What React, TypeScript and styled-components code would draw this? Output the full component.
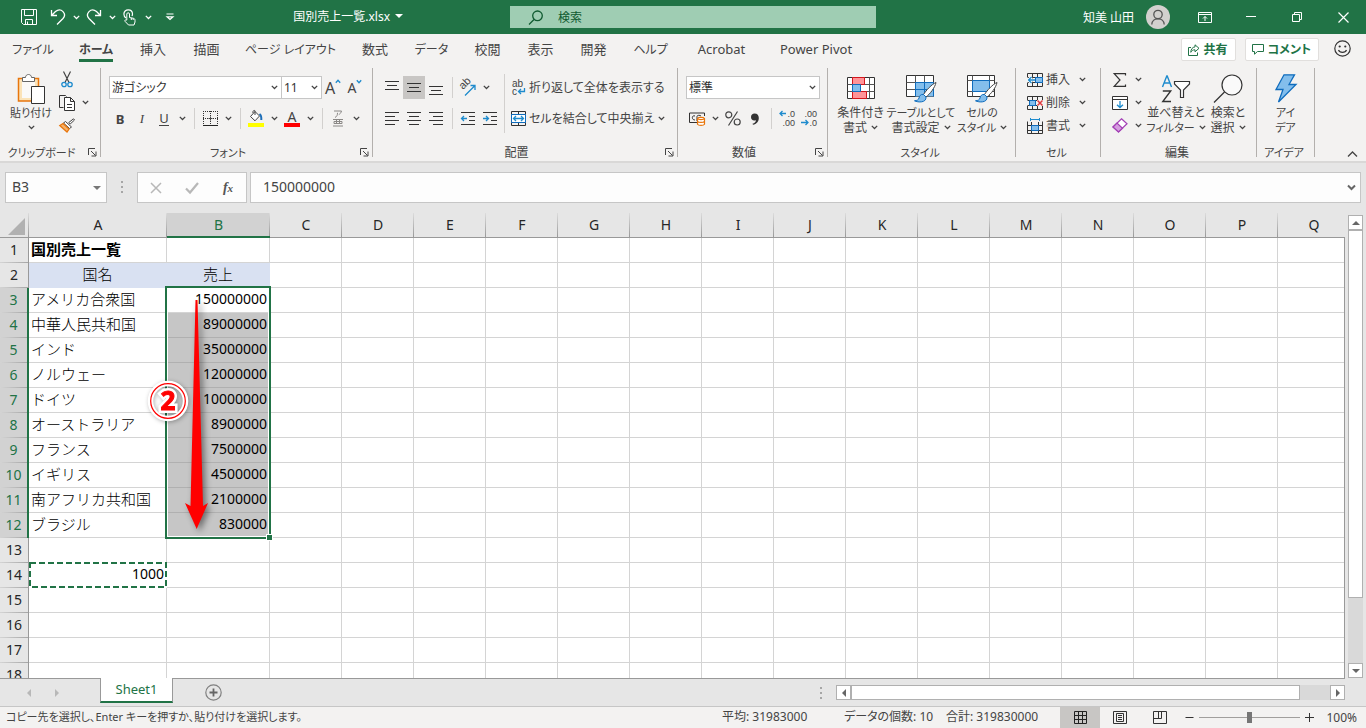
import React from "react";
import styled, { createGlobalStyle, css } from "styled-components";

const UI = `"Noto Sans", "Noto Sans CJK JP", sans-serif`;
const SHEET = `"Noto Sans", "Noto Sans CJK JP", sans-serif`;
const GREEN = "#217346";
const INK = "#444444";
const BLUE = "#1e8bcd";
const ORANGE = "#e8760c";

/* Labels written only in kana are set one size smaller. */
const isKana = (text: string) => /^[\u3041-\u30ff ]+$/.test(text);

const GlobalStyle = createGlobalStyle`
  *, *::before, *::after { box-sizing: border-box; }
  body { margin: 0; background: #e6e6e6; color: ${INK}; font: 12px/15px ${UI}; font-feature-settings: "palt"; }
  button, input, select { font: inherit; font-feature-settings: inherit; color: inherit; margin: 0; }
  button { border: 0; padding: 0; background: none; }
  svg { display: block; flex: none; overflow: visible; }
`;

const Page = styled.div`
  display: flex;
  flex-direction: column;
  height: 100vh;
  overflow: hidden;
`;

/* ---------- drawing helpers ---------- */

type DrawProps = { w: number; h: number; children: React.ReactNode };
const Draw = ({ w, h, children }: DrawProps) => (
  <svg width={w} height={h} viewBox={`0 0 ${w} ${h}`} fill="none" stroke={INK} strokeWidth="1" aria-hidden="true">
    {children}
  </svg>
);

const Chevron = ({ color = INK }: { color?: string }) => (
  <svg width="7" height="5" viewBox="0 0 7 5" fill="none" stroke={color} strokeWidth="1.3" aria-hidden="true">
    <path d="M0.8 0.9L3.5 3.5L6.2 0.9" />
  </svg>
);

const Triangle = ({ dir, color = "#666" }: { dir: "up" | "down" | "left" | "right"; color?: string }) => {
  const shapes = {
    up: "M0 6L4 2L8 6Z",
    down: "M0 2L4 6L8 2Z",
    left: "M6 0L2 4L6 8Z",
    right: "M2 0L6 4L2 8Z",
  };
  return (
    <svg width="8" height="8" viewBox="0 0 8 8" fill={color} aria-hidden="true">
      <path d={shapes[dir]} />
    </svg>
  );
};

/* ---------- title bar ---------- */

const TitleBar = styled.header`
  display: grid;
  grid-template-columns: 510fr 366fr 490fr;
  align-items: center;
  height: 34px;
  flex: none;
  background: ${GREEN};
  color: #fff;
`;

const TitleStart = styled.div`
  display: flex;
  align-items: center;
  justify-content: space-between;
  padding: 0 107px 0 14px;
`;

const QuickAccess = styled.div`
  display: flex;
  align-items: center;
`;

const QuickButton = styled.button<{ $w?: number }>`
  display: flex;
  align-items: center;
  justify-content: center;
  width: ${(p) => p.$w ?? 28}px;
  height: 34px;
`;

const FileName = styled.button`
  display: flex;
  align-items: center;
  gap: 5px;
  padding-bottom: 2px;
  font-size: 12px;
  white-space: nowrap;
`;

const SearchBox = styled.label`
  display: flex;
  align-items: center;
  gap: 14px;
  height: 22px;
  padding-left: 18px;
  background: #9fcdb3;
  color: #0f5a30;
`;

const SearchInput = styled.input`
  flex: 1;
  min-width: 0;
  padding: 0;
  border: 0;
  outline: 0;
  background: none;
  &::placeholder { color: #0f5a30; opacity: 1; }
`;

const TitleEnd = styled.div`
  display: flex;
  align-items: center;
  justify-content: flex-end;
`;

const Account = styled.button`
  display: flex;
  align-items: center;
  gap: 12px;
  padding-right: 12px;
`;

const WindowButton = styled.button`
  display: flex;
  align-items: center;
  justify-content: center;
  width: 46px;
  height: 34px;
`;

/* ---------- ribbon tabs ---------- */

const TabRow = styled.nav`
  display: flex;
  justify-content: space-between;
  height: 32px;
  flex: none;
  background: #f3f2f1;
`;

const TabStrip = styled.div`
  display: grid;
  grid-template-columns: 66px 60px 54px 53px 115px 54px 59px 53px 53px 53px 61px 81px 108px;
`;

const Tab = styled.button<{ $active?: boolean; $kana?: boolean }>`
  display: flex;
  justify-content: center;
  padding-top: 6px;
  font-size: ${(p) => (p.$kana ? 12 : 13)}px;
  line-height: 19px;
  white-space: nowrap;
  ${(p) =>
    p.$active &&
    css`
      font-weight: 700;
      span { border-bottom: 3px solid ${GREEN}; height: 22px; }
    `}
`;

const TabActions = styled.div`
  display: flex;
  align-items: flex-start;
  gap: 9px;
  padding: 4px 15px 0 0;
`;

const ActionButton = styled.button`
  display: flex;
  align-items: center;
  gap: 4px;
  height: 23px;
  padding: 0 7px 0 6px;
  border: 1px solid #e1dfdd;
  border-radius: 2px;
  background: #fff;
  color: ${GREEN};
  font-weight: 700;
  white-space: nowrap;
`;

const SmileButton = styled.button`
  padding: 2px 0 0 6px;
`;

/* ---------- ribbon ---------- */

const Ribbon = styled.div`
  display: flex;
  height: 95px;
  flex: none;
  background: #f3f2f1;
`;

const Group = styled.section<{ $w: number }>`
  display: flex;
  flex-direction: column;
  width: ${(p) => p.$w}px;
  height: 89px;
  margin-top: 2px;
  border-right: 1px solid #b3b0ad;
`;

const GroupBody = styled.div<{ $pad?: number; $gap?: number }>`
  display: flex;
  flex: 1;
  align-items: flex-start;
  gap: ${(p) => p.$gap ?? 0}px;
  padding-left: ${(p) => p.$pad ?? 8}px;
`;

const GroupFooter = styled.div<{ $kana?: boolean }>`
  display: flex;
  align-items: center;
  height: 10px;
  padding-right: 3px;
  text-align: center;
  white-space: nowrap;
  font-size: ${(p) => (p.$kana ? 11 : 12)}px;
`;

const GroupLabel = styled.span`
  flex: 1;
`;

const Launcher = styled.button`
  width: 9px;
  margin-left: 5px;
`;

const RibbonEnd = styled.div`
  display: flex;
  flex: 1;
  align-items: flex-end;
  justify-content: flex-end;
  padding: 0 8px 4px 0;
`;

const Rows = styled.div<{ $top?: number; $gap?: number }>`
  display: flex;
  flex-direction: column;
  gap: ${(p) => p.$gap ?? 8}px;
  padding-top: ${(p) => p.$top ?? 8}px;
`;

const Row = styled.div`
  display: flex;
  align-items: center;
  height: 23px;
`;

const Tool = styled.button<{ $on?: boolean }>`
  display: flex;
  align-items: center;
  justify-content: center;
  width: 22px;
  height: 23px;
  background: ${(p) => (p.$on ? "#c8c6c4" : "none")};
`;

const Drop = styled.button<{ $w?: number }>`
  display: flex;
  align-items: center;
  justify-content: center;
  width: ${(p) => p.$w ?? 14}px;
  height: 23px;
`;

const Rule = styled.span`
  width: 1px;
  height: 21px;
  margin: 0 4px 0 5px;
  background: #d2d0ce;
`;

const TallRule = styled.span`
  width: 1px;
  height: 59px;
  margin: 6px 3px 0;
  background: #d2d0ce;
`;

const Letter = styled.span<{ $kind: "bold" | "italic" | "underline" }>`
  font-size: 13px;
  line-height: 14px;
  font-weight: ${(p) => (p.$kind === "bold" ? 700 : 400)};
  font-style: ${(p) => (p.$kind === "italic" ? "italic" : "normal")};
  font-family: ${(p) => (p.$kind === "italic" ? `"Liberation Serif", serif` : UI)};
  border-bottom: ${(p) => (p.$kind === "underline" ? `1px solid ${INK}` : "0")};
`;

const SizeLetter = styled.span<{ $size: number }>`
  font-size: ${(p) => p.$size}px;
  line-height: 20px;
`;

const Swatch = styled.span<{ $color: string }>`
  display: flex;
  flex-direction: column;
  align-items: center;
  width: 16px;
  height: 17px;
  border-bottom: 4px solid ${(p) => p.$color};
  line-height: 13px;
  font-size: 14px;
`;

const SelectBox = styled.span<{ $w: number }>`
  display: grid;
  grid-template-columns: 1fr 13px;
  align-items: center;
  width: ${(p) => p.$w}px;
  height: 23px;
  border: 1px solid #c6c6c6;
  background: #fff;
  & + & { border-left: 0; }
  select {
    grid-area: 1 / 1 / 2 / 3;
    appearance: none;
    width: 100%;
    height: 21px;
    padding: 0 2px;
    border: 0;
    background: none;
    color: #333;
  }
  svg { grid-area: 1 / 2; justify-self: center; pointer-events: none; }
`;

const TextTool = styled.button<{ $gap?: number }>`
  display: flex;
  align-items: center;
  gap: ${(p) => p.$gap ?? 3}px;
  height: 23px;
  padding-left: 3px;
  white-space: nowrap;
`;

const BigButton = styled.button<{ $w: number }>`
  display: flex;
  flex-direction: column;
  align-items: center;
  width: ${(p) => p.$w}px;
  padding-top: 4px;
  white-space: nowrap;
`;

const BigIcon = styled.span`
  display: flex;
  align-items: center;
  justify-content: center;
  height: 33px;
`;

const BigLine = styled.span<{ $kana?: boolean }>`
  display: flex;
  align-items: center;
  gap: 4px;
  height: 15px;
  font-size: ${(p) => (p.$kana ? 11 : 12)}px;
`;

const Spacer = styled.span`
  width: 5px;
`;

/* ---------- formula bar ---------- */

const FormulaBar = styled.div`
  display: flex;
  align-items: flex-start;
  height: 52px;
  flex: none;
  padding: 9px 5px 0;
  border-top: 2px solid #d9d8d7;
`;

const FieldBox = styled.div<{ $w?: number }>`
  display: flex;
  align-items: center;
  justify-content: space-between;
  height: 31px;
  ${(p) => (p.$w ? `width: ${p.$w}px;` : "flex: 1; min-width: 0;")}
  border: 1px solid #c6c6c6;
  background: #fdfdfd;
`;

const FieldInput = styled.input<{ $pad: number }>`
  flex: 1;
  min-width: 0;
  height: 29px;
  padding: 0 0 2px ${(p) => p.$pad}px;
  border: 0;
  outline: 0;
  background: none;
  font: 14px/18px ${SHEET};
`;

const FieldDrop = styled.button`
  display: flex;
  justify-content: center;
  width: 18px;
`;

const FormulaButton = styled.button`
  display: flex;
  justify-content: center;
  width: 36px;
`;

const Grip = styled.span`
  display: flex;
  flex-direction: column;
  gap: 3px;
  i { width: 2px; height: 2px; background: #a6a6a6; }
`;

const GripSlot = styled.div`
  display: flex;
  align-items: center;
  justify-content: center;
  width: 30px;
  height: 29px;
`;

const FieldGap = styled.div`
  width: 3px;
`;

/* ---------- sheet ---------- */

const Work = styled.main`
  display: flex;
  flex: 1;
  min-height: 0;
`;

const SheetView = styled.div`
  position: relative;
  flex: 1;
  min-width: 0;
  overflow: hidden;
`;

const SheetEdge = styled.div`
  width: 1px;
  margin-top: 24px;
  background: #999;
`;

const Grid = styled.table`
  width: 100%;
  min-width: 1350px;
  table-layout: fixed;
  border-collapse: separate;
  border-spacing: 0;
  color: #000;
  font: 14px/22px ${SHEET};
  font-feature-settings: normal;
`;

const ColHead = styled.th<{ $on?: boolean }>`
  height: 25px;
  padding: 0;
  font-weight: 400;
  color: ${(p) => (p.$on ? GREEN : "#262626")};
  border-bottom: ${(p) => (p.$on ? `2px solid ${GREEN}` : "1px solid #999")};
  background: linear-gradient(#dcdcdc, #999) right / 1px 100% no-repeat ${(p) => (p.$on ? "#d2d2d2" : "#e6e6e6")};
`;

const RowHead = styled.th<{ $on?: boolean }>`
  height: 25px;
  padding: 0 0 2px;
  font-weight: 400;
  color: ${(p) => (p.$on ? GREEN : "#262626")};
  border-right: ${(p) => (p.$on ? `2px solid ${GREEN}` : "1px solid #999")};
  background: linear-gradient(90deg, #d4d4d4, #a6a6a6) bottom / 100% 1px no-repeat ${(p) => (p.$on ? "#d2d2d2" : "#e6e6e6")};
`;

const Cell = styled.td<{ $kind?: string }>`
  height: 25px;
  padding: 0 2px 2px;
  overflow: hidden;
  white-space: nowrap;
  background: #fff;
  border-right: 1px solid #d4d4d4;
  border-bottom: 1px solid #d4d4d4;
  ${(p) => p.$kind === "text" && css`font-size: 15px; font-weight: 300;`}
  ${(p) => p.$kind === "title" && css`font-size: 15px; font-weight: 700;`}
  ${(p) =>
    p.$kind === "head" &&
    css`
      font-size: 15px;
      font-weight: 300;
      text-align: center;
      background: #d9e1f2;
      border-color: #d9e1f2;
    `}
  ${(p) => (p.$kind === "num" || p.$kind === "picked") && css`text-align: right;`}
  ${(p) => p.$kind === "picked" && css`background: #c6c6c6; border-color: #b0b0b0;`}
`;

const Selection = styled.div`
  position: absolute;
  left: 165px;
  top: 73px;
  width: 106px;
  height: 253px;
  border: 2px solid ${GREEN};
  box-shadow: inset 0 0 0 1px #fff;
`;

const FillHandle = styled.span`
  position: absolute;
  right: -4px;
  bottom: -4px;
  width: 7px;
  height: 7px;
  border: 1px solid #fff;
  background: ${GREEN};
`;

const CopyMarquee = styled.div`
  position: absolute;
  left: 29px;
  top: 349px;
`;

const DragArrow = styled.div`
  position: absolute;
  left: 180px;
  top: 84px;
  filter: drop-shadow(3px 3px 3px rgba(0, 0, 0, 0.45));
`;

const StepBadge = styled.div`
  position: absolute;
  left: 144px;
  top: 164px;
  filter: drop-shadow(1px 1px 2px rgba(0, 0, 0, 0.3));
`;

const VScroll = styled.div`
  display: flex;
  flex-direction: column;
  width: 15px;
  margin: 2px 3px 0;
  background: #d9d9d9;
`;

const ScrollButton = styled.button`
  display: flex;
  align-items: center;
  justify-content: center;
  width: 15px;
  height: 15px;
  flex: none;
  border: 1px solid #b0b0b0;
  background: #fff;
`;

const Thumb = styled.div<{ $grow: number }>`
  flex: ${(p) => p.$grow};
  border: 1px solid #b0b0b0;
  background: #fff;
`;

const Track = styled.div<{ $grow: number }>`
  flex: ${(p) => p.$grow};
`;

/* ---------- sheet tabs & status ---------- */

const SheetBar = styled.div`
  display: flex;
  height: 28px;
  flex: none;
`;

const BarPart = styled.div<{ $w?: number }>`
  display: flex;
  align-items: center;
  ${(p) => (p.$w ? `width: ${p.$w}px;` : "flex: 1; min-width: 0;")}
  border-top: 1px solid #999;
`;

const SheetNav = styled(BarPart)`
  gap: 20px;
  padding-left: 25px;
`;

const SheetTab = styled.button`
  width: 73px;
  height: 25px;
  border: 1px solid #999;
  border-width: 0 1px;
  border-bottom: 2px solid ${GREEN};
  background: #fff;
  color: ${GREEN};
  font-size: 13px;
`;

const TabFill = styled(BarPart)`
  justify-content: space-between;
  padding: 0 14px 0 32px;
`;

const HScroll = styled.div`
  display: flex;
  flex: 1;
  height: 15px;
  background: #d9d9d9;
`;

const EndPad = styled.div`
  width: 21px;
`;

const StatusBar = styled.footer`
  display: flex;
  align-items: stretch;
  height: 22px;
  flex: none;
  border-top: 1px solid #c6c6c6;
  background: #f3f2f1;
  white-space: nowrap;
  line-height: 20px;
`;

const StatusText = styled.span`
  flex: 1;
  padding-left: 6px;
  font-size: 11px;
`;

const Stats = styled.div`
  display: grid;
  grid-template-columns: 122px 102px 114px;
`;

const ViewButton = styled.button<{ $on?: boolean }>`
  display: flex;
  align-items: center;
  justify-content: center;
  width: 40px;
  background: ${(p) => (p.$on ? "#c8c6c4" : "none")};
`;

const ZoomBox = styled.div`
  display: flex;
  align-items: center;
  gap: 5px;
  padding: 0 9px 0 5px;
`;

const ZoomSlider = styled.input`
  appearance: none;
  width: 101px;
  height: 11px;
  background: linear-gradient(#a19f9d, #a19f9d) center / 100% 1px no-repeat;
  &::-webkit-slider-thumb {
    appearance: none;
    width: 5px;
    height: 11px;
    background: #767676;
  }
`;

const ZoomValue = styled.span`
  width: 38px;
  text-align: right;
`;

/* ---------- icons ---------- */

const SaveIcon = () => (
  <Draw w={16} h={16}>
    <path d="M0.5 0.5H15.5V15.5H2.5L0.5 13.5ZM3.5 0.5V6.5H12.5V0.5M4.5 15.5V10.5H11.5V15.5M6.5 12.5V15.5" stroke="#fff" />
  </Draw>
);
const UndoIcon = () => (
  <Draw w={16} h={16}>
    <path d="M1.500 1V6.500H7M1.500 6.500L5.500 2.600C8 0.500 11 0.600 13 2.600C15 4.700 15 7.300 13 9.500L7 15.500" stroke="#fff" strokeWidth="1.300" />
  </Draw>
);
const RedoIcon = () => (
  <Draw w={16} h={16}>
    <path d="M14.500 1V6.500H9M14.500 6.500L10.500 2.600C8 0.500 5 0.600 3 2.600C1 4.700 1 7.300 3 9.500L9 15.500" stroke="#fff" strokeWidth="1.300" />
  </Draw>
);
const TouchIcon = () => (
  <Draw w={14} h={17}>
    <path d="M3 9C1.500 8 0.900 6.800 0.900 5C0.900 2.500 2.800 0.800 5.200 0.800C7.600 0.800 9.500 2.500 9.500 5C9.500 5.800 9.300 6.400 9 7" stroke="#fff" strokeWidth="1.200" />
    <path d="M3.800 11V5C3.800 3.400 6.500 3.400 6.500 5V8.500L10.500 9.300C11.600 9.600 12 10.200 12 11.200V13L11 16H5.500L2 12.300C1.400 11.300 2.600 10.300 3.800 11.200M8.300 9V11M10.200 9.300V11" stroke="#fff" />
  </Draw>
);
const ExpandIcon = () => (
  <Draw w={8} h={8}>
    <path d="M0.500 1H7.500M1 3.800L4 6.500L7 3.800Z" stroke="#fff" strokeWidth="1.200" />
  </Draw>
);
const SearchIcon = () => (
  <Draw w={16} h={15}>
    <path d="M6 9.500L1 14.500" stroke="#0f5a30" strokeWidth="1.300" />
    <circle cx="9.500" cy="5.800" r="4.800" stroke="#0f5a30" strokeWidth="1.300" />
  </Draw>
);
const Avatar = () => (
  <Draw w={24} h={24}>
    <circle cx="12" cy="12" r="12" fill="#d2d0ce" stroke="none" />
    <circle cx="12" cy="9.500" r="4.200" stroke="#555" strokeWidth="1.300" />
    <path d="M5.800 19.500C5.800 11.800 18.200 11.800 18.200 19.500" stroke="#555" strokeWidth="1.300" />
  </Draw>
);
const RibbonModeIcon = () => (
  <Draw w={14} h={11}>
    <path d="M0.500 0.500H13.500V10.500H0.500ZM0.500 2.500H13.500M7 9V4.500M5 6.500L7 4.500L9 6.500" stroke="#fff" />
  </Draw>
);
const MinimizeIcon = () => (
  <Draw w={10} h={10}>
    <path d="M0 4.500H10" stroke="#fff" />
  </Draw>
);
const RestoreIcon = () => (
  <Draw w={10} h={10}>
    <path d="M0.500 2.500H7.500V9.500H0.500ZM2.500 2.500V0.500H9.500V7.500H7.500" stroke="#fff" />
  </Draw>
);
const CloseIcon = () => (
  <Draw w={11} h={11}>
    <path d="M0.500 0.500L10.500 10.500M10.500 0.500L0.500 10.500" stroke="#fff" strokeWidth="1.200" />
  </Draw>
);
const ShareIcon = () => (
  <Draw w={12} h={12}>
    <path d="M3 3.500H0.500V11.500H9.500V8.500M7 0.800L11 4.300L7 7.800V5.800C4.800 5.800 3.600 6.800 2.800 8.300C2.900 5.300 4.300 3.200 7 2.900Z" stroke={GREEN} />
  </Draw>
);
const CommentIcon = () => (
  <Draw w={12} h={11}>
    <path d="M0.500 0.500H11.500V7.500H5.500L2.500 10.200V7.500H0.500Z" stroke={GREEN} />
  </Draw>
);
const SmileIcon = () => (
  <Draw w={17} h={17}>
    <circle cx="8.500" cy="8.500" r="7.700" stroke="#333" strokeWidth="1.200" />
    <path d="M4.500 10C5.800 13.200 11.200 13.200 12.500 10" stroke="#333" strokeWidth="1.200" />
    <circle cx="5.700" cy="6.500" r="1.100" fill="#333" stroke="none" />
    <circle cx="11.300" cy="6.500" r="1.100" fill="#333" stroke="none" />
  </Draw>
);
const PasteIcon = () => (
  <Draw w={28} h={30}>
    <path d="M1.500 4.500H21.500V27H1.500Z" fill="#fbe3b8" stroke={ORANGE} strokeWidth="1.500" />
    <path d="M5 7H18V24H5Z" fill="#faf9f8" stroke="none" />
    <path d="M5.500 7.500V3.500H8.500C8.500 -0.500 14.500 -0.500 14.500 3.500H17.500V7.500Z" fill="#fff" stroke="#666" />
    <path d="M14.500 12.500H27.500V29.500H14.500Z" fill="#fff" stroke="#333" />
  </Draw>
);
const CutIcon = () => (
  <Draw w={12} h={17}>
    <path d="M2.500 0.500L8 11.500M9.500 0.500L4 11.500" stroke="#444" strokeWidth="1.200" />
    <circle cx="3" cy="13.500" r="2.200" stroke={BLUE} strokeWidth="1.300" />
    <circle cx="9" cy="13.500" r="2.200" stroke={BLUE} strokeWidth="1.300" />
  </Draw>
);
const CopyIcon = () => (
  <Draw w={16} h={16}>
    <path d="M4.500 12.500H0.500V0.500H6.500L7.500 1.500" stroke="#333" />
    <path d="M5.500 2.500H11.500L15.500 6.500V15.500H5.500ZM11.500 2.500V6.500H15.500M8 9.500H13M8 12.500H13" stroke="#333" fill="#fff" />
  </Draw>
);
const BrushIcon = () => (
  <Draw w={16} h={15}>
    <path d="M14.500 0.800L9.800 4.500L11.200 6L15.500 2Z" fill="#fff" stroke="#444" />
    <path d="M6.500 3.500L12.500 9L10.500 10.500L4.500 5Z" fill="#fff" stroke="#444" />
    <path d="M4 5.500L10 11L8 14L0.800 7.500Z" fill="#f6b26b" stroke={ORANGE} strokeWidth="1.300" />
  </Draw>
);
const LaunchIcon = () => (
  <Draw w={9} h={9}>
    <path d="M0.500 7V0.500H7M3 3L7.500 7.500M8 3.500V8H3.500" />
  </Draw>
);
const BorderIcon = () => (
  <Draw w={15} h={15}>
    <path d="M0.500 0V14M14.500 0V14M7.500 0V14M0 0.500H15M0 7.500H15" stroke="#333" strokeDasharray="1 1" />
    <path d="M0 14.500H15" stroke="#222" />
    <path d="M5.500 7.500H9.500M7.500 5.500V9.500" />
  </Draw>
);
const FillIcon = () => (
  <Draw w={14} h={12}>
    <path d="M6 1.500L1.500 6.500L6 10.800L10.500 6ZM6 5V0.800C5 -0.200 3.500 1 4 3" fill="#fff" stroke="#444" />
    <path d="M10.500 4C12 5 12.500 7 12.300 10" stroke="#1e6fb8" strokeWidth="2" />
  </Draw>
);
const PhoneticIcon = () => (
  <Draw w={12} h={17}>
    <path d="M2 1H9.500C9 3 8 4 6.800 4.500M5.500 2.800C5.500 5 5 6.500 3 7.500M1 9.500H11M2 11.500H10V13.500H2ZM4.500 9.500V13.500M7.500 9.500V13.500M1 16H11" stroke="#8a8886" />
  </Draw>
);
const lineSets: Record<string, number[][]> = {
  top: [[0, 14], [2, 12], [0, 14]],
  left: [[0, 14], [0, 10], [0, 14], [0, 10]],
  center: [[0, 14], [2, 12], [0, 14], [2, 12]],
  right: [[0, 14], [4, 14], [0, 14], [4, 14]],
};
const AlignIcon = ({ set, y = 1, h = 15 }: { set: string; y?: number; h?: number }) => (
  <Draw w={14} h={h}>
    {lineSets[set].map(([a, b], i) => (
      <path key={i} d={`M${a} ${y + 0.5 + i * 4}H${b}`} stroke="#333" />
    ))}
  </Draw>
);
const IconText = styled.text`
  font-family: "Liberation Sans", sans-serif;
  fill: #444;
  stroke: none;
`;
const OrientationIcon = () => (
  <Draw w={18} h={17}>
    <IconText transform="translate(4 11) rotate(-45)" fontSize="11">ab</IconText>
    <path d="M6 16.500L15.500 7M11.500 6.500H16V11" stroke={BLUE} strokeWidth="1.300" />
  </Draw>
);
const IndentIcon = ({ more }: { more?: boolean }) => (
  <Draw w={15} h={14}>
    <path d="M0 0.500H14M8 4.500H14M8 8.500H14M0 12.500H14" stroke="#333" />
    <path d={more ? "M0 6.500H5.500M3 4L5.500 6.500L3 9" : "M6 6.500H0.500M3 4L0.500 6.500L3 9"} stroke={BLUE} strokeWidth="1.300" />
  </Draw>
);
const WrapIcon = () => (
  <Draw w={15} h={17}>
    <IconText x="1" y="8" fontSize="10">ab</IconText>
    <IconText x="1" y="16" fontSize="10">c</IconText>
    <path d="M13.500 9V12.500H7.500M10 10L7.500 12.500L10 15" stroke={BLUE} strokeWidth="1.300" />
  </Draw>
);
const MergeIcon = () => (
  <Draw w={15} h={15}>
    <path d="M0.500 0.500H14.500V14.500H0.500ZM7.500 0.500V3M7.500 12V14.500" stroke="#333" />
    <path d="M0.500 3.500H14.500V11.500H0.500Z" fill="#fff" stroke="#0f6cbd" />
    <path d="M2.500 7.500H12.500M5 5L2.500 7.500L5 10M10 5L12.500 7.500L10 10" stroke={BLUE} strokeWidth="1.300" />
  </Draw>
);
const CurrencyIcon = () => (
  <Draw w={17} h={14}>
    <path d="M15.500 4V1H0.500V10.500H8M6 4C3 2.500 2 8 6 8M8 9V4.500C8 3 11 3 12 4" stroke="#333" />
    <path d="M8.500 6.500V12.200C9.500 13.800 14.500 13.800 15.500 12.200V6.500C14.500 5 9.500 5 8.500 6.500ZM8.500 6.500C9.500 8 14.500 8 15.500 6.500M8.500 9.300C9.500 10.800 14.500 10.800 15.500 9.300" fill="#fff" stroke={ORANGE} strokeWidth="1.200" />
  </Draw>
);
const PercentIcon = () => (
  <Draw w={16} h={15}>
    <circle cx="3.800" cy="3.800" r="3" strokeWidth="1.200" />
    <circle cx="12.200" cy="11" r="3" strokeWidth="1.200" />
    <path d="M12.500 0.500L3.500 14.500" strokeWidth="1.200" />
  </Draw>
);
const CommaIcon = () => (
  <Draw w={10} h={12}>
    <path d="M4.500 0.500C7.500 0.500 8.800 2.500 8.800 5C8.800 8.500 6.500 11 3 11.800L2.500 10.800C4.800 10 6 8.500 6 7.200C3 8.300 1 6.500 1 4C1 2 2.500 0.500 4.500 0.500Z" fill="#333" stroke="none" />
  </Draw>
);
const DecimalIcon = ({ less }: { less?: boolean }) => (
  <Draw w={16} h={17}>
    <IconText x="16" y="7" textAnchor="end" fontSize="9">{less ? ".00" : ".0"}</IconText>
    <IconText x="16" y="16" textAnchor="end" fontSize="9">{less ? ".0" : ".00"}</IconText>
    <path d={less ? "M0 12.500H7M4.500 10L7 12.500L4.500 15" : "M7 3.500H1M3.500 1L1 3.500L3.500 6"} stroke={BLUE} strokeWidth="1.300" />
  </Draw>
);
const ConditionalIcon = () => (
  <Draw w={28} h={23}>
    <path d="M0.500 0.500H27.500V21.500H0.500Z" fill="#fff" stroke="#333" />
    <path d="M0.500 7.500H27.500M0.500 14.500H27.500M5.500 0.500V21.500M22.500 0.500V21.500" stroke="#555" />
    <path d="M5.500 0.500H17.500V7.500H5.500ZM5.500 14.500H19.500V21.500H5.500Z" fill="#ff9498" stroke="#d4161c" />
    <path d="M5.500 7.500H13.500V14.500H5.500Z" fill="#83beec" stroke="#0f6cbd" />
  </Draw>
);
const BrushStroke = () => (
  <>
    <path d="M30 7.500C26 9 20 15.500 17.500 19.500L20 22C24 19 29 12.500 30 7.500Z" fill="#fff" stroke="#444" />
    <path d="M17.500 19.500C14.500 19 13.500 21 13 23C12.500 25 11 25.500 8.500 25.800C12 27.500 20.500 28 20 22Z" fill="#83beec" stroke="#0f6cbd" />
  </>
);
const FormatTableIcon = () => (
  <Draw w={31} h={28}>
    <path d="M0.500 0.500H27.500V21.500H0.500Z" fill="#fff" stroke="#333" />
    <path d="M9.500 7.500H27.500V21.500H9.500Z" fill="#83beec" stroke="none" />
    <path d="M0.500 7.500H27.500M0.500 14.500H9.500M9.500 0.500V7.500M18.500 0.500V7.500" stroke="#555" />
    <path d="M9.500 21.500V7.500H27.500V21.500M9.500 14.500H27.500M18.500 7.500V21.500" stroke="#0f6cbd" />
    <BrushStroke />
  </Draw>
);
const CellStyleIcon = () => (
  <Draw w={31} h={28}>
    <path d="M0.500 0.500H27.500V21.500H0.500Z" fill="#fff" stroke="#333" />
    <path d="M0.500 5.500H27.500M0.500 16.500H27.500M5.500 0.500V21.500M22.500 0.500V21.500" stroke="#555" />
    <path d="M5.500 5.500H22.500V16.500H5.500Z" fill="#83beec" stroke="#0f6cbd" />
    <BrushStroke />
  </Draw>
);
const CellBase = () => <path d="M0.500 4V0.500H15.500V4M0.500 10V13.500H15.500V10M5.500 0.500V13.500M10.500 0.500V13.500M0.500 4.500H15.500M0.500 9.500H15.500" stroke="#333" />;
const InsertCellIcon = () => (
  <Draw w={16} h={14}>
    <CellBase />
    <path d="M8.500 4.500H15.500V9.500H8.500Z" fill="#83beec" stroke="#0f6cbd" />
    <path d="M8 7H1.500M4.500 4L1.500 7L4.500 10" stroke="#fff" strokeWidth="3" />
    <path d="M8 7H1.500M4.500 4L1.500 7L4.500 10" stroke={BLUE} strokeWidth="1.300" />
  </Draw>
);
const DeleteCellIcon = () => (
  <Draw w={16} h={14}>
    <CellBase />
    <path d="M2.500 4.500H8.500V9.500H2.500Z" fill="#83beec" stroke="#0f6cbd" />
    <path d="M10 4H16V10H10Z" fill="#f3f2f1" stroke="none" />
    <path d="M10.500 4.500L15.500 9.500M15.500 4.500L10.500 9.500" stroke="#e03a3e" strokeWidth="1.500" />
  </Draw>
);
const FormatCellIcon = () => (
  <Draw w={16} h={16}>
    <path d="M0.500 3.500V15.500H15.500V3.500M0.500 7.500H15.500M0.500 12.500H15.500M4.500 4V15.500M11.500 4V15.500" stroke="#333" />
    <path d="M4.500 7.500H11.500V12.500H4.500Z" fill="#83beec" stroke="#0f6cbd" />
    <path d="M3.500 1.500H12.500M3.500 0V3M12.500 0V3" stroke={BLUE} />
  </Draw>
);
const SigmaIcon = () => (
  <Draw w={14} h={14}>
    <path d="M12.500 2.500V0.700H1.200L7 7L1.200 13.300H12.500V11.500" stroke="#333" strokeWidth="1.200" />
  </Draw>
);
const FillDownIcon = () => (
  <Draw w={16} h={14}>
    <path d="M0.500 0.500H15.500V13.500H0.500ZM0.500 3.500H15.500" fill="#fff" stroke="#333" />
    <path d="M8 5V11.500M5 8.700L8 11.500L11 8.700" stroke={BLUE} strokeWidth="1.300" />
  </Draw>
);
const EraserIcon = () => (
  <Draw w={16} h={15}>
    <path d="M9.500 0.800L15 5.800L6.500 14L1 9Z" fill="#fff" stroke="#a33fb5" strokeWidth="1.200" />
    <path d="M1 9L5 5L10.500 10.200L6.500 14Z" fill="#d59ddf" stroke="#a33fb5" strokeWidth="1.200" />
  </Draw>
);
const SortFilterIcon = () => (
  <Draw w={30} h={28}>
    <path d="M1.500 12L5.800 1H6.200L10.500 12M3 8H9" stroke={BLUE} strokeWidth="1.400" />
    <path d="M1.800 16H9.700L1.800 26.500H10" stroke="#333" strokeWidth="1.400" />
    <path d="M13.500 6.500H28.500V9L22.500 15V22.500H19.500V15L13.500 9Z" fill="#fff" stroke="#333" strokeWidth="1.200" />
  </Draw>
);
const FindIcon = () => (
  <Draw w={30} h={30}>
    <path d="M11.500 18L1 28.500" stroke="#333" strokeWidth="1.300" />
    <circle cx="19" cy="11" r="10" fill="#fafafa" stroke="#333" strokeWidth="1.200" />
  </Draw>
);
const IdeasIcon = () => (
  <Draw w={22} h={29}>
    <path d="M9 0.800H19.500L14 10.500H21L3.500 28L8 15.500H1Z" fill="#83beec" stroke="#0f6cbd" strokeWidth="1.300" />
  </Draw>
);
const CancelIcon = () => (
  <Draw w={12} h={12}>
    <path d="M1 1L11 11M11 1L1 11" stroke="#b8b8b8" strokeWidth="1.500" />
  </Draw>
);
const CheckIcon = () => (
  <Draw w={14} h={12}>
    <path d="M1 6.500L5 10.500L13 1" stroke="#b8b8b8" strokeWidth="2.200" />
  </Draw>
);
const FxMark = styled.i`
  font: italic 700 14px/16px "Liberation Serif", serif;
  color: #555;
  small { font-size: 11px; }
`;
const AddSheetIcon = () => (
  <Draw w={17} h={17}>
    <circle cx="8.500" cy="8.500" r="7.700" stroke="#808080" strokeWidth="1.200" />
    <path d="M8.500 4.500V12.500M4.500 8.500H12.500" stroke="#666" strokeWidth="1.800" />
  </Draw>
);
const NormalViewIcon = () => (
  <Draw w={13} h={13}>
    <path d="M0.500 0.500H12.500V12.500H0.500ZM4.500 0.500V12.500M8.500 0.500V12.500M0.500 4.500H12.500M0.500 8.500H12.500" stroke="#222" />
  </Draw>
);
const PageViewIcon = () => (
  <Draw w={14} h={13}>
    <path d="M0.500 0.500H13.500V12.500H0.500ZM3.500 2.500H10.500V10.500H3.500ZM5 4.500H9M5 6.500H9M5 8.500H9" stroke="#333" />
  </Draw>
);
const BreakViewIcon = () => (
  <Draw w={14} h={13}>
    <path d="M0.500 0.500H13.500V12.500H0.500ZM5.500 0.500V7.500M8.500 0.500V7.500H0.500" stroke="#333" />
  </Draw>
);
const CornerMark = () => (
  <svg width="29" height="22" viewBox="0 0 29 22" aria-hidden="true">
    <path d="M25 4V21H8Z" fill="#b1b1b1" />
  </svg>
);
const CaretSvg = styled.svg`
  align-self: flex-start;
  margin-top: 3px;
`;
const Caret = ({ up }: { up?: boolean }) => (
  <CaretSvg width="6" height="5" viewBox="0 0 6 5" fill="none" stroke={BLUE} strokeWidth="1.3" aria-hidden="true">
    <path d={up ? "M0.800 3.800L3 1.300L5.200 3.800" : "M0.800 1.200L3 3.700L5.200 1.200"} />
  </CaretSvg>
);

/* ---------- data ---------- */

const tabs = ["ファイル", "ホーム", "挿入", "描画", "ページ レイアウト", "数式", "データ", "校閲", "表示", "開発", "ヘルプ", "Acrobat", "Power Pivot"];
const columns = "ABCDEFGHIJKLMNOPQ".split("");
const colWidths: Record<string, string> = { A: "138px", B: "103px", Q: "auto" };

type CellData = [string, string];
const cells: Record<string, CellData> = {
  A1: ["国別売上一覧", "title"],
  A2: ["国名", "head"],
  B2: ["売上", "head"],
  A14: ["1000", "num"],
};
const sales: [string, string][] = [
  ["アメリカ合衆国", "150000000"],
  ["中華人民共和国", "89000000"],
  ["インド", "35000000"],
  ["ノルウェー", "12000000"],
  ["ドイツ", "10000000"],
  ["オーストラリア", "8900000"],
  ["フランス", "7500000"],
  ["イギリス", "4500000"],
  ["南アフリカ共和国", "2100000"],
  ["ブラジル", "830000"],
];
sales.forEach(([name, value], i) => {
  cells[`A${i + 3}`] = [name, "text"];
  cells[`B${i + 3}`] = [value, i === 0 ? "num" : "picked"];
});

/* ---------- composed parts ---------- */

const DropTool = ({ label }: { label: string }) => (
  <Drop aria-label={label}>
    <Chevron />
  </Drop>
);

const QuickDrop = ({ label }: { label: string }) => (
  <Drop $w={8} aria-label={label}>
    <Chevron color="#fff" />
  </Drop>
);

const Big = ({ w, icon, lines, drop }: { w: number; icon: React.ReactNode; lines: string[]; drop?: boolean }) => (
  <BigButton $w={w}>
    <BigIcon>{icon}</BigIcon>
    {lines.map((line, i) => (
      <BigLine key={line} $kana={isKana(line)}>
        {line}
        {drop && i === lines.length - 1 && <Chevron />}
      </BigLine>
    ))}
  </BigButton>
);

const Footer = ({ label, launch }: { label: string; launch?: boolean }) => (
  <GroupFooter $kana={isKana(label)}>
    <GroupLabel>{label}</GroupLabel>
    {launch && (
      <Launcher aria-label={`${label}の設定`}>
        <LaunchIcon />
      </Launcher>
    )}
  </GroupFooter>
);

const CellTool = ({ icon, text }: { icon: React.ReactNode; text: string }) => (
  <Row>
    <TextTool>
      {icon}
      <span>{text}</span>
    </TextTool>
    <Spacer />
    <DropTool label={`${text}メニュー`} />
  </Row>
);

export default function App() {
  return (
    <Page>
      <GlobalStyle />
      <TitleBar>
        <TitleStart>
          <QuickAccess>
            <QuickButton $w={30} aria-label="上書き保存"><SaveIcon /></QuickButton>
            <QuickButton aria-label="元に戻す"><UndoIcon /></QuickButton>
            <QuickDrop label="元に戻すメニュー" />
            <QuickButton aria-label="やり直し"><RedoIcon /></QuickButton>
            <QuickDrop label="やり直しメニュー" />
            <QuickButton aria-label="タッチ モード"><TouchIcon /></QuickButton>
            <QuickDrop label="タッチ モード メニュー" />
            <QuickButton $w={36} aria-label="ツール バーのカスタマイズ"><ExpandIcon /></QuickButton>
          </QuickAccess>
          <FileName>
            国別売上一覧.xlsx
            <Triangle dir="down" color="#fff" />
          </FileName>
        </TitleStart>
        <SearchBox>
          <SearchIcon />
          <SearchInput type="text" placeholder="検索" aria-label="検索" />
        </SearchBox>
        <TitleEnd>
          <Account>
            知美 山田
            <Avatar />
          </Account>
          <WindowButton aria-label="リボンの表示オプション"><RibbonModeIcon /></WindowButton>
          <WindowButton aria-label="最小化"><MinimizeIcon /></WindowButton>
          <WindowButton aria-label="元に戻す (縮小)"><RestoreIcon /></WindowButton>
          <WindowButton aria-label="閉じる"><CloseIcon /></WindowButton>
        </TitleEnd>
      </TitleBar>

      <TabRow>
        <TabStrip>
          {tabs.map((t) => (
            <Tab key={t} $active={t === "ホーム"} $kana={isKana(t)}>
              <span>{t}</span>
            </Tab>
          ))}
        </TabStrip>
        <TabActions>
          <ActionButton><ShareIcon />共有</ActionButton>
          <ActionButton><CommentIcon />コメント</ActionButton>
          <SmileButton aria-label="フィードバック"><SmileIcon /></SmileButton>
        </TabActions>
      </TabRow>

      <Ribbon>
        <Group $w={101}>
          <GroupBody $pad={6}>
            <BigButton $w={50}>
              <BigIcon><PasteIcon /></BigIcon>
              <BigLine $kana>貼り付け</BigLine>
              <BigLine><Chevron /></BigLine>
            </BigButton>
            <Rows $top={0} $gap={0}>
              <Row><Tool aria-label="切り取り"><CutIcon /></Tool></Row>
              <Row><Tool aria-label="コピー"><CopyIcon /></Tool><DropTool label="コピー メニュー" /></Row>
              <Row><Tool aria-label="書式のコピー"><BrushIcon /></Tool></Row>
            </Rows>
          </GroupBody>
          <Footer label="クリップボード" launch />
        </Group>

        <Group $w={272}>
          <GroupBody>
            <Rows>
              <Row>
                <SelectBox $w={173}>
                  <select aria-label="フォント"><option>游ゴシック</option></select>
                  <Chevron />
                </SelectBox>
                <SelectBox $w={40}>
                  <select aria-label="フォント サイズ"><option>11</option></select>
                  <Chevron />
                </SelectBox>
                <Tool aria-label="フォント サイズの拡大"><SizeLetter $size={16}>A</SizeLetter><Caret up /></Tool>
                <Tool aria-label="フォント サイズの縮小"><SizeLetter $size={14}>A</SizeLetter><Caret /></Tool>
              </Row>
              <Row>
                <Tool aria-label="太字"><Letter $kind="bold">B</Letter></Tool>
                <Tool aria-label="斜体"><Letter $kind="italic">I</Letter></Tool>
                <Tool aria-label="下線"><Letter $kind="underline">U</Letter></Tool>
                <DropTool label="下線メニュー" />
                <Rule />
                <Tool aria-label="罫線"><BorderIcon /></Tool>
                <DropTool label="罫線メニュー" />
                <Rule />
                <Tool aria-label="塗りつぶしの色"><Swatch $color="#ffff00"><FillIcon /></Swatch></Tool>
                <DropTool label="塗りつぶしメニュー" />
                <Tool aria-label="フォントの色"><Swatch $color="#ff0000">A</Swatch></Tool>
                <DropTool label="フォントの色メニュー" />
                <Rule />
                <Tool aria-label="ふりがな"><PhoneticIcon /></Tool>
                <DropTool label="ふりがなメニュー" />
              </Row>
            </Rows>
          </GroupBody>
          <Footer label="フォント" launch />
        </Group>

        <Group $w={305}>
          <GroupBody>
            <Rows>
              <Row>
                <Tool aria-label="上揃え"><AlignIcon set="top" /></Tool>
                <Tool $on aria-label="上下中央揃え"><AlignIcon set="top" y={3} /></Tool>
                <Tool aria-label="下揃え"><AlignIcon set="top" y={6} /></Tool>
                <Rule />
                <Tool aria-label="方向"><OrientationIcon /></Tool>
                <DropTool label="方向メニュー" />
              </Row>
              <Row>
                <Tool aria-label="左揃え"><AlignIcon set="left" /></Tool>
                <Tool aria-label="中央揃え"><AlignIcon set="center" /></Tool>
                <Tool aria-label="右揃え"><AlignIcon set="right" /></Tool>
                <Rule />
                <Tool aria-label="インデントを減らす"><IndentIcon /></Tool>
                <Tool aria-label="インデントを増やす"><IndentIcon more /></Tool>
              </Row>
            </Rows>
            <TallRule />
            <Rows>
              <Row>
                <TextTool><WrapIcon />折り返して全体を表示する</TextTool>
              </Row>
              <Row>
                <TextTool><MergeIcon />セルを結合して中央揃え</TextTool>
                <DropTool label="セル結合メニュー" />
              </Row>
            </Rows>
          </GroupBody>
          <Footer label="配置" launch />
        </Group>

        <Group $w={150}>
          <GroupBody>
            <Rows>
              <Row>
                <SelectBox $w={134}>
                  <select aria-label="表示形式"><option>標準</option></select>
                  <Chevron />
                </SelectBox>
              </Row>
              <Row>
                <Tool aria-label="通貨表示形式"><CurrencyIcon /></Tool>
                <DropTool label="通貨メニュー" />
                <Tool aria-label="パーセント スタイル"><PercentIcon /></Tool>
                <Tool aria-label="桁区切りスタイル"><CommaIcon /></Tool>
                <Rule />
                <Tool aria-label="小数点以下の表示桁数を増やす"><DecimalIcon /></Tool>
                <Tool aria-label="小数点以下の表示桁数を減らす"><DecimalIcon less /></Tool>
              </Row>
            </Rows>
          </GroupBody>
          <Footer label="数値" launch />
        </Group>

        <Group $w={188}>
          <GroupBody $pad={5}>
            <Big w={55} icon={<ConditionalIcon />} lines={["条件付き", "書式"]} drop />
            <Big w={66} icon={<FormatTableIcon />} lines={["テーブルとして", "書式設定"]} drop />
            <Big w={56} icon={<CellStyleIcon />} lines={["セルの", "スタイル"]} drop />
          </GroupBody>
          <Footer label="スタイル" />
        </Group>

        <Group $w={85}>
          <GroupBody>
            <Rows $top={0} $gap={0}>
              <CellTool icon={<InsertCellIcon />} text="挿入" />
              <CellTool icon={<DeleteCellIcon />} text="削除" />
              <CellTool icon={<FormatCellIcon />} text="書式" />
            </Rows>
          </GroupBody>
          <Footer label="セル" />
        </Group>

        <Group $w={156}>
          <GroupBody>
            <Rows $top={0} $gap={0}>
              <Row><Tool aria-label="合計"><SigmaIcon /></Tool><DropTool label="合計メニュー" /></Row>
              <Row><Tool aria-label="フィル"><FillDownIcon /></Tool><DropTool label="フィル メニュー" /></Row>
              <Row><Tool aria-label="クリア"><EraserIcon /></Tool><DropTool label="クリア メニュー" /></Row>
            </Rows>
            <Big w={62} icon={<SortFilterIcon />} lines={["並べ替えと", "フィルター"]} drop />
            <Big w={42} icon={<FindIcon />} lines={["検索と", "選択"]} drop />
          </GroupBody>
          <Footer label="編集" />
        </Group>

        <Group $w={58}>
          <GroupBody $pad={0}>
            <Big w={57} icon={<IdeasIcon />} lines={["アイ", "デア"]} />
          </GroupBody>
          <Footer label="アイデア" />
        </Group>

        <RibbonEnd>
          <button aria-label="リボンを折りたたむ">
            <Draw w={11} h={6}><path d="M1 5.500L5.500 1L10 5.500" strokeWidth="1.300" /></Draw>
          </button>
        </RibbonEnd>
      </Ribbon>

      <FormulaBar>
        <FieldBox $w={102}>
          <FieldInput $pad={6} defaultValue="B3" aria-label="名前ボックス" />
          <FieldDrop aria-label="名前の一覧"><Triangle dir="down" color="#777" /></FieldDrop>
        </FieldBox>
        <GripSlot><Grip><i /><i /><i /></Grip></GripSlot>
        <FieldBox $w={110}>
          <FormulaButton aria-label="キャンセル"><CancelIcon /></FormulaButton>
          <FormulaButton aria-label="入力"><CheckIcon /></FormulaButton>
          <FormulaButton aria-label="関数の挿入"><FxMark>f<small>x</small></FxMark></FormulaButton>
        </FieldBox>
        <FieldGap />
        <FieldBox>
          <FieldInput $pad={12} defaultValue="150000000" aria-label="数式バー" />
          <FieldDrop aria-label="数式バーの展開">
            <Draw w={9} h={7}><path d="M1 1.500L4.500 5L8 1.500" stroke="#666" strokeWidth="2" /></Draw>
          </FieldDrop>
        </FieldBox>
      </FormulaBar>

      <Work>
        <SheetView>
          <Grid>
            <colgroup>
              <col style={{ width: 29 }} />
              {columns.map((c) => (
                <col key={c} style={{ width: colWidths[c] ?? "72px" }} />
              ))}
            </colgroup>
            <thead>
              <tr>
                <ColHead aria-label="すべて選択"><CornerMark /></ColHead>
                {columns.map((c) => (
                  <ColHead key={c} scope="col" $on={c === "B"}>{c}</ColHead>
                ))}
              </tr>
            </thead>
            <tbody>
              {Array.from({ length: 18 }, (_, i) => i + 1).map((r) => (
                <tr key={r}>
                  <RowHead scope="row" $on={r >= 3 && r <= 12}>{r}</RowHead>
                  {columns.map((c) => {
                    const cell = cells[`${c}${r}`];
                    return <Cell key={c} $kind={cell?.[1]}>{cell?.[0]}</Cell>;
                  })}
                </tr>
              ))}
            </tbody>
          </Grid>
          <Selection><FillHandle /></Selection>
          <CopyMarquee>
            <svg width="138" height="26" viewBox="0 0 138 26" fill="none" aria-hidden="true">
              <rect x="1" y="1" width="136" height="24" stroke="#fff" strokeWidth="2" />
              <rect x="1" y="1" width="136" height="24" stroke={GREEN} strokeWidth="2" strokeDasharray="6 3" />
            </svg>
          </CopyMarquee>
          <DragArrow>
            <svg width="34" height="236" viewBox="0 0 34 236" aria-hidden="true">
              <path d="M15.500 3H17.500L23 209L28 206L16.700 232L5 206L10.500 209Z" fill="#ff0000" />
            </svg>
          </DragArrow>
          <StepBadge>
            <svg width="48" height="48" viewBox="0 0 48 48" aria-hidden="true">
              <circle cx="24" cy="24" r="17.500" fill="none" stroke="#fff" strokeWidth="5.500" />
              <circle cx="24" cy="24" r="17.300" fill="none" stroke="#f00" strokeWidth="1.200" />
              <text x="24" y="33" textAnchor="middle" fontSize="26" fontWeight="700" fill="#ff0000" stroke="#fff" strokeWidth="6" paintOrder="stroke">2</text>
              <text x="24" y="33" textAnchor="middle" fontSize="26" fontWeight="700" fill="none" stroke="#ff0000" strokeWidth="1" aria-hidden="true">2</text>
            </svg>
          </StepBadge>
        </SheetView>
        <SheetEdge />
        <VScroll>
          <ScrollButton aria-label="上へ"><Triangle dir="up" /></ScrollButton>
          <Thumb $grow={369} />
          <Track $grow={65} />
          <ScrollButton aria-label="下へ"><Triangle dir="down" /></ScrollButton>
        </VScroll>
      </Work>

      <SheetBar>
        <SheetNav $w={100}>
          <Triangle dir="left" color="#b8b8b8" />
          <Triangle dir="right" color="#b8b8b8" />
        </SheetNav>
        <SheetTab>Sheet1</SheetTab>
        <TabFill>
          <button aria-label="新しいシート"><AddSheetIcon /></button>
          <Grip><i /><i /><i /></Grip>
        </TabFill>
        <BarPart $w={509}>
          <HScroll>
            <ScrollButton aria-label="左へ"><Triangle dir="left" /></ScrollButton>
            <Thumb $grow={449} />
            <Track $grow={30} />
            <ScrollButton aria-label="右へ"><Triangle dir="right" /></ScrollButton>
          </HScroll>
        </BarPart>
        <EndPad />
      </SheetBar>

      <StatusBar>
        <StatusText>コピー先を選択し、Enter キーを押すか、貼り付けを選択します。</StatusText>
        <Stats>
          <span>平均: 31983000</span>
          <span>データの個数: 10</span>
          <span>合計: 319830000</span>
        </Stats>
        <ViewButton $on aria-label="標準"><NormalViewIcon /></ViewButton>
        <ViewButton aria-label="ページ レイアウト"><PageViewIcon /></ViewButton>
        <ViewButton aria-label="改ページ プレビュー"><BreakViewIcon /></ViewButton>
        <ZoomBox>
          <button aria-label="縮小"><Draw w={9} h={9}><path d="M0.500 4.500H8.500" stroke="#333" /></Draw></button>
          <ZoomSlider type="range" min={0} max={100} defaultValue={50} aria-label="ズーム" />
          <button aria-label="拡大"><Draw w={9} h={9}><path d="M0 4.500H9M4.500 0V9" stroke="#333" /></Draw></button>
          <ZoomValue>100%</ZoomValue>
        </ZoomBox>
      </StatusBar>
    </Page>
  );
}
